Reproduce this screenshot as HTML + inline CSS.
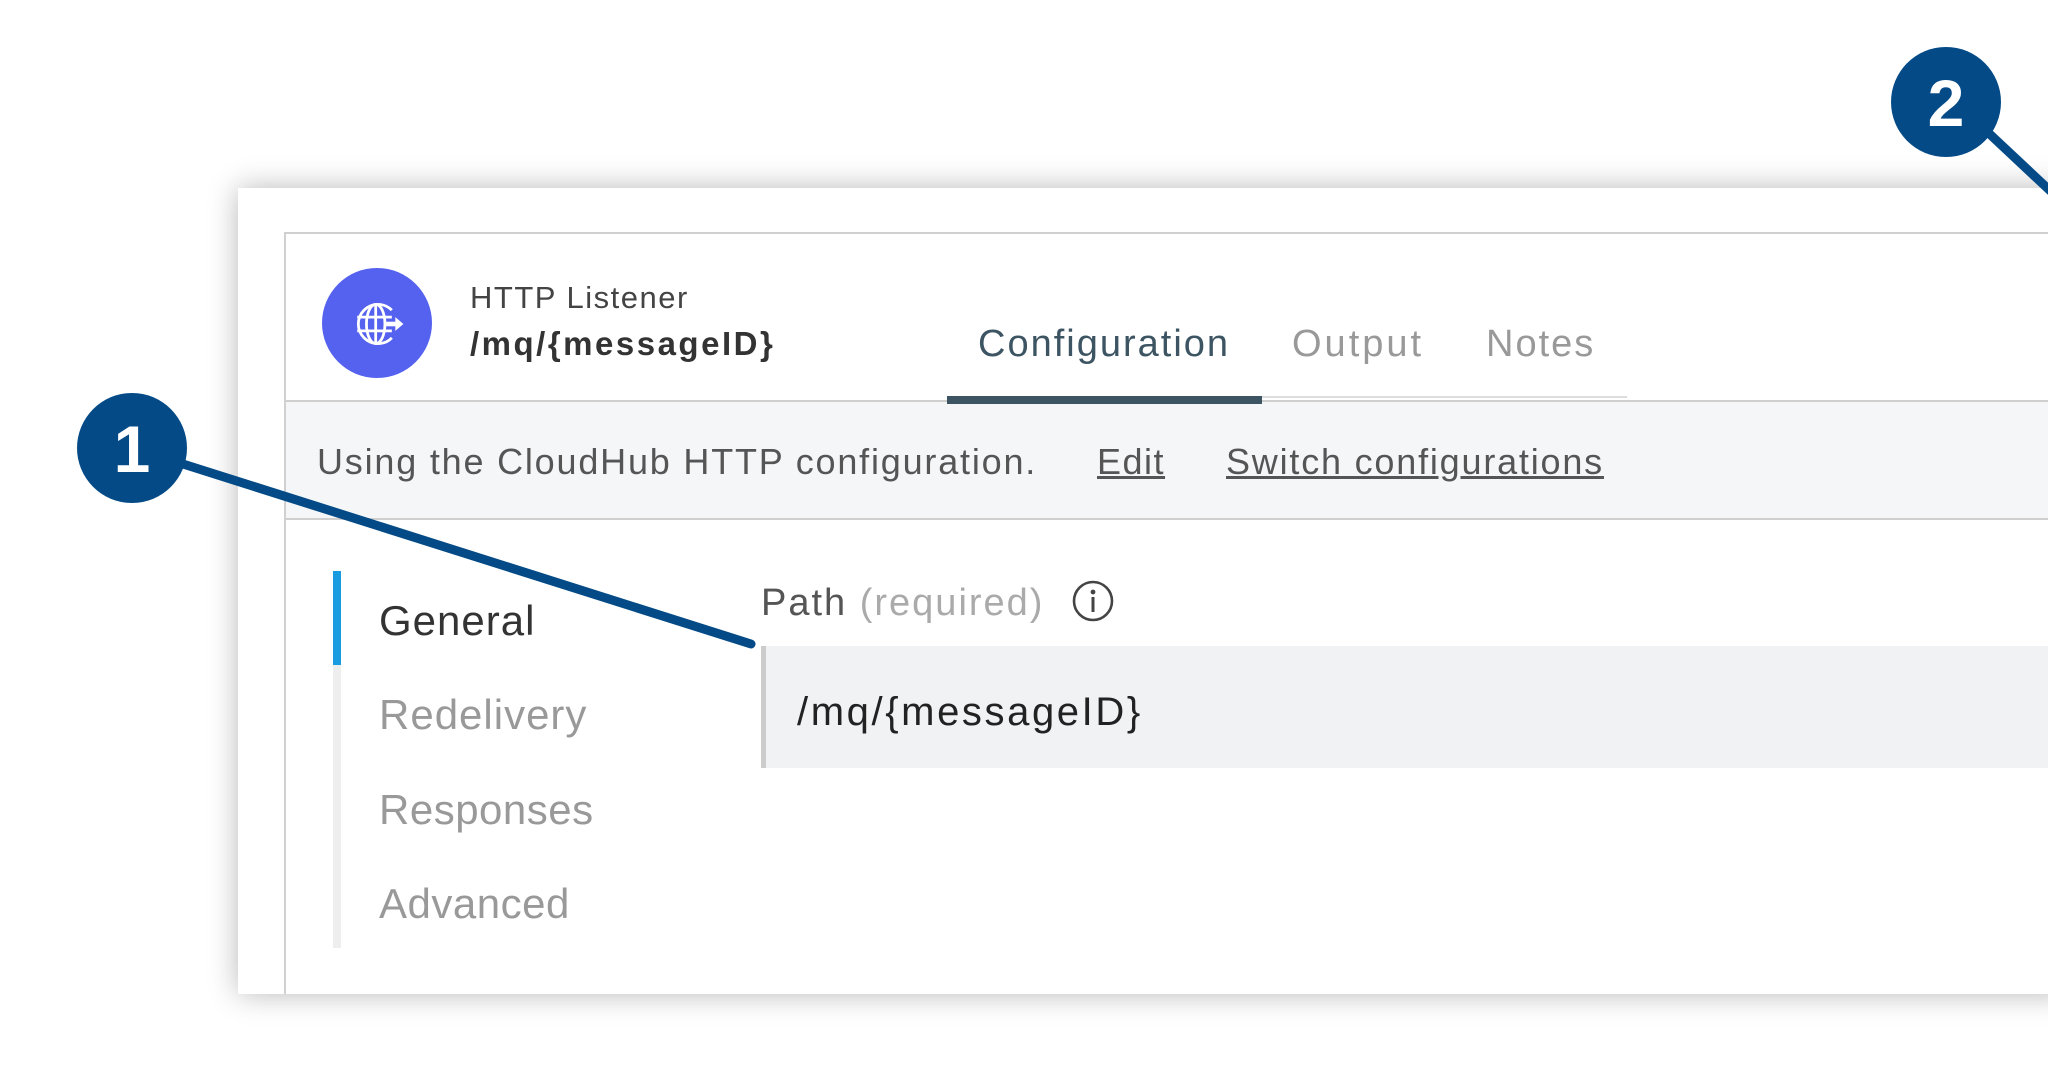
<!DOCTYPE html>
<html><head><meta charset="utf-8"><style>
html,body{margin:0;padding:0;width:2048px;height:1074px;overflow:hidden;background:#fff;font-family:"Liberation Sans",sans-serif;}
.a{position:absolute;white-space:nowrap;}
</style></head><body>
<div class="a" style="left:238px;top:188px;width:1830px;height:806px;background:#fff;box-shadow:0 0 28px rgba(0,0,0,0.28);"></div>
<div class="a" style="left:284px;top:232px;width:1780px;height:762px;border-left:2px solid #d0d0d0;border-top:2px solid #d0d0d0;box-sizing:border-box;"></div>
<div class="a" style="left:286px;top:400px;width:1762px;height:120px;background:#f5f6f8;border-top:2px solid #cfcfcf;border-bottom:2px solid #cfcfcf;box-sizing:border-box;"></div>
<div class="a" style="left:322px;top:268px;width:110px;height:110px;border-radius:50%;background:#5562ef;"></div>
<svg class="a" style="left:348px;top:294px" width="60" height="60" viewBox="0 0 52 52" fill="none" stroke="#fff" stroke-width="2.4">
<path d="M38 14 A17 17 0 1 0 38 38"/><ellipse cx="24" cy="26" rx="8" ry="17"/><line x1="24" y1="9" x2="24" y2="43"/><line x1="8" y1="20" x2="38" y2="20"/><line x1="8" y1="32" x2="38" y2="32"/>
<path d="M33 26 H42" stroke-width="4"/><path d="M41 20 L48 26 L41 32 Z" fill="#fff" stroke="none"/></svg>
<div class="a" style="left:470px;top:280px;font-size:31px;color:#444;letter-spacing:1.5px;">HTTP Listener</div>
<div class="a" style="left:470px;top:325px;font-size:33px;color:#333;font-weight:bold;letter-spacing:2.5px;">/mq/{messageID}</div>
<div class="a" style="left:978px;top:323px;font-size:38px;color:#3d5563;letter-spacing:2px;">Configuration</div>
<div class="a" style="left:1292px;top:323px;font-size:38px;color:#999;letter-spacing:3px;">Output</div>
<div class="a" style="left:1486px;top:323px;font-size:38px;color:#999;letter-spacing:2px;">Notes</div>
<div class="a" style="left:947px;top:396px;width:680px;height:2px;background:#ddd;"></div>
<div class="a" style="left:947px;top:396px;width:315px;height:8px;background:#3d5563;"></div>
<div class="a" style="left:317px;top:441px;font-size:36px;color:#555;letter-spacing:1.8px;">Using the CloudHub HTTP configuration.</div>
<div class="a" style="left:1097px;top:441px;font-size:36px;color:#555;text-decoration:underline;letter-spacing:1.5px;">Edit</div>
<div class="a" style="left:1226px;top:441px;font-size:36px;color:#555;text-decoration:underline;letter-spacing:1.8px;">Switch configurations</div>
<div class="a" style="left:333px;top:571px;width:8px;height:377px;background:#eee;"></div>
<div class="a" style="left:333px;top:571px;width:8px;height:94px;background:#1b9be0;"></div>
<div class="a" style="left:379px;top:597px;font-size:42px;color:#333;letter-spacing:1px;">General</div>
<div class="a" style="left:379px;top:691px;font-size:42px;color:#999;letter-spacing:1px;">Redelivery</div>
<div class="a" style="left:379px;top:786px;font-size:42px;color:#999;letter-spacing:0.5px;">Responses</div>
<div class="a" style="left:379px;top:880px;font-size:42px;color:#999;letter-spacing:0.5px;">Advanced</div>
<div class="a" style="left:761px;top:582px;font-size:38px;color:#555;letter-spacing:2px;">Path <span style="color:#aaa">(required)</span></div>
<svg class="a" style="left:1071px;top:579px" width="44" height="44" viewBox="0 0 44 44"><circle cx="22" cy="22" r="19" fill="none" stroke="#444" stroke-width="2.6"/><circle cx="22" cy="13" r="2.4" fill="#444"/><rect x="20.5" y="18" width="3" height="15" fill="#444"/></svg>
<div class="a" style="left:761px;top:646px;width:1287px;height:122px;background:#f1f2f4;border-left:5px solid #ccc;box-sizing:border-box;"></div>
<div class="a" style="left:797px;top:690px;font-size:40px;color:#222;letter-spacing:2.6px;">/mq/{messageID}</div>
<svg class="a" style="left:0;top:0" width="2048" height="1074">
<line x1="183" y1="464" x2="751" y2="644" stroke="#034a86" stroke-width="9" stroke-linecap="round"/>
<line x1="1980" y1="125" x2="2060" y2="200" stroke="#034a86" stroke-width="9"/>
<circle cx="132" cy="448" r="55" fill="#034a86"/>
<circle cx="1946" cy="102" r="55" fill="#034a86"/>
<text x="132" y="472" font-size="66" font-weight="bold" fill="#fff" text-anchor="middle" font-family="Liberation Sans">1</text>
<text x="1946" y="126" font-size="66" font-weight="bold" fill="#fff" text-anchor="middle" font-family="Liberation Sans">2</text>
</svg>
</body></html>
